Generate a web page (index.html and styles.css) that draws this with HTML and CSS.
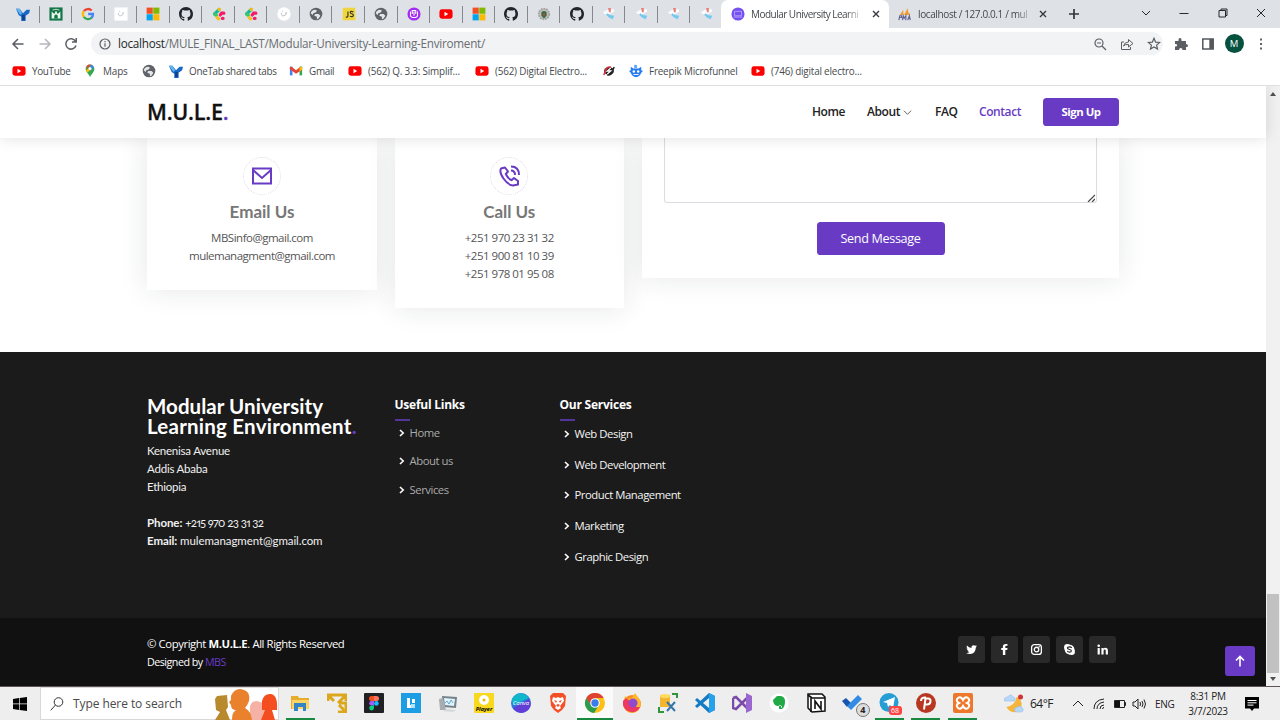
FILE: index.html
```
<!DOCTYPE html>
<html lang="en">
<head>
<meta charset="utf-8">
<title>Modular University Learning Environment</title>
<link rel="stylesheet" href="styles.css">
</head>
<body>
<svg class="defs" width="0" height="0">
  <symbol id="onetab" viewBox="0 0 16 16"><path d="M0 2h4l4 5 4-4h4l-1 4-4 3v6H6v-5L3 9z" fill="#1769c5"/><path d="M0 2l5 7 2-2-3-5z" fill="#63b4ef"/><path d="M7 9h3v6H7z" fill="#123e8c"/></symbol>
  <symbol id="bag" viewBox="0 0 16 16"><path d="M.5.5h15v15H.5z" fill="#137447"/><path d="M3 5v8h10V5l-3 3-2-4-2 4z" fill="#eaf7ed"/><path d="M6 13V10q2-3 4 0v3z" fill="#137447"/><path d="M4 3.500q4-2 8 0" stroke="#cfe9d8" fill="none"/></symbol>
  <symbol id="google" viewBox="0 0 16 16" fill="none" stroke-width="2.6"><path d="M3.2 4.7A6 6 0 0 1 12.2 4" stroke="#ea4335"/><path d="M3.2 11.3a6 6 0 0 1 0-6.6" stroke="#fbbc05"/><path d="M12 12.3a6 6 0 0 1-8.8-1" stroke="#34a853"/><path d="M8.2 8h5.5a6 6 0 0 1-1.8 4.4" stroke="#4285f4"/></symbol>
  <symbol id="plain" viewBox="0 0 16 16"><path d="M.5.5h15v15H.5z" fill="#fff"/><path d="M5 7q0 4 3 3t3-4M6 5h1m2 2h1" stroke="#b9c1ca" fill="none"/></symbol>
  <symbol id="plaincircle" viewBox="0 0 16 16"><circle cx="8" cy="8" r="7.6" fill="#fff"/><path d="M5 7q0 4 3 3t3-4M6 5h1m2 2h1" stroke="#aeb7c1" fill="none"/></symbol>
  <symbol id="ms" viewBox="0 0 16 16"><path d="M.7.7h7v7h-7z" fill="#f25022"/><path d="M8.3.7h7v7h-7z" fill="#7fba00"/><path d="M.7 8.3h7v7h-7z" fill="#00a4ef"/><path d="M8.3 8.3h7v7h-7z" fill="#ffb900"/></symbol>
  <symbol id="github" viewBox="0 0 16 16"><path fill="#20262d" d="M8 0C3.58 0 0 3.58 0 8c0 3.54 2.29 6.53 5.47 7.59.4.07.55-.17.55-.38v-1.49c-2.01.37-2.53-.49-2.69-.94-.09-.23-.48-.94-.82-1.13-.28-.15-.68-.52-.01-.53.63-.01 1.08.58 1.23.82.72 1.21 1.87.87 2.33.66.07-.52.28-.87.51-1.07-1.78-.2-3.64-.89-3.64-3.95 0-.87.31-1.59.82-2.15-.08-.2-.36-1.02.08-2.12 0 0 .67-.21 2.2.82a7.6 7.6 0 0 1 4 0c1.53-1.04 2.2-.82 2.2-.82.44 1.1.16 1.92.08 2.12.51.56.82 1.27.82 2.15 0 3.07-1.87 3.75-3.65 3.95.29.25.54.73.54 1.48v2.2c0 .21.15.46.55.38A8 8 0 0 0 16 8c0-4.42-3.58-8-8-8z"/></symbol>
  <symbol id="clerk" viewBox="0 0 16 16" stroke-linecap="round" stroke-width="3.800" fill="none"><path d="M3 8l5-5" stroke="#14b89a"/><path d="M3 8l2 1.500" stroke="#3fc66a"/><path d="M8 2.800h.5" stroke="#eabf1c"/><path d="M13.500 7h-2.500L9.500 9" stroke="#f51b67"/><path d="M6 12l1.500 1.500" stroke="#f3c02a"/><path d="M12 13h.5" stroke="#f51b67"/></symbol>
  <symbol id="globe" viewBox="0 0 16 16"><circle cx="8" cy="8" r="7.2" fill="#606368"/><path d="M2 7q1-4 5-4l2 1-1 2-3 1-1 2zm5 1h4l2 2-2 3-2 1v-3l-3-1z" fill="#e4e6e9"/></symbol>
  <symbol id="js" viewBox="0 0 16 16"><path d="M.8.8h14.4v14.4H.8z" fill="#efd63f"/><path d="M6.800 5v5q0 2-2.500 1.500M13 5.600q-3.600-1.400-3.600.6c0 1.800 3.600 1.200 3.600 3.200 0 2-2.500 2-4 1" fill="none" stroke="#37342a" stroke-width="1.3"/></symbol>
  <symbol id="ublock" viewBox="0 0 16 16"><circle cx="8" cy="8" r="7.5" fill="#a32df1"/><path d="M4 5v4q0 3 4 3t4-3V5M6 8V4h4v4M8 5v5" stroke="#fff" stroke-width="1.2" fill="none"/></symbol>
  <symbol id="yt" viewBox="0 0 16 16"><rect y="2.5" x=".5" width="15" height="11" rx="2.8" fill="#f00"/><path d="M6.3 5.5l4.2 2.5-4.2 2.5z" fill="#fff"/></symbol>
  <symbol id="seal" viewBox="0 0 16 16"><circle cx="8" cy="8" r="6" fill="#c5beb7" stroke="#9fa3a0" stroke-width="2" stroke-dasharray="2 1"/><path d="M5 6q3-3 6 0v4l-3 3-3-3z" fill="#366e4b"/><path d="M7 7h2v3H7z" fill="#c0463f"/></symbol>
  <symbol id="fig" viewBox="0 0 16 16"><path d="M1 6l5-3 3 1 4-2 1 3-5 3H3z" fill="#f8fcff"/><path d="M7 1h3v5H8z" fill="#eb7d70"/><path d="M6 7l3 2 5 1-2 4-4-2-3-3z" fill="#73c9f0"/></symbol>
  <symbol id="maps" viewBox="0 0 16 16"><path d="M8 15.500C8 12 3 10 3 5.500a5 5 0 0 1 10 0C13 10 8.600 12 8 15.500z" fill="#34a853"/><path d="M4.200 2.200A5 5 0 0 1 9 .7L5 6z" fill="#ea4335"/><path d="M9 .7a5 5 0 0 1 3.500 2.900L8 8z" fill="#4285f4"/><path d="M3.400 7.500L8 3v4L4.800 10z" fill="#fbbc04"/><circle cx="8" cy="5.500" r="1.700" fill="#fff"/></symbol>
  <symbol id="gmail" viewBox="0 0 16 16"><path d="M1 3h3v10H1z" fill="#4285f4"/><path d="M12 3h3v10h-3z" fill="#34a853"/><path d="M1 3.500L3 3l5 4 5-4 2 .5v3L8 11 1 6z" fill="#ea4335"/><path d="M12 3.500l3 0v3l-3 2z" fill="#fbbc04"/></symbol>
  <symbol id="stop" viewBox="0 0 16 16"><ellipse cx="8" cy="8" rx="5.600" ry="4.500" fill="#1d1d1f"/><path d="M2 12.500L4 9A5 5 0 0 1 10 3.500" fill="none" stroke="#d92d35" stroke-width="1.800"/><path d="M14 3.500L12 7A5 5 0 0 1 6 12.500" fill="none" stroke="#222" stroke-width="1.800"/><path d="M10 4.500L6 8h4l-4 3.500" fill="none" stroke="#fff" stroke-width="1.500"/></symbol>
  <symbol id="freepik" viewBox="0 0 16 16"><path d="M2 3l3 2h6l3-2v4l2 1-2 2q-2 5-6 5t-6-5L0 8l2-1z" fill="#277cf4"/><path d="M6 1h3v4H6z" fill="#5aa3ff"/><circle cx="5.500" cy="8.500" r="1.400" fill="#fff"/><circle cx="10.500" cy="8.500" r="1.400" fill="#fff"/><path d="M5 12h6" stroke="#fff"/></symbol>
  <symbol id="chev" viewBox="0 0 8 10"><path d="M2 2l3.200 3L2 8" fill="none" stroke="#fff" stroke-width="1.600"/></symbol>
</svg>

<div class="tabs">
  <div class="pins">
    <i><svg><use href="#onetab"/></svg></i><i><svg><use href="#bag"/></svg></i><i><svg><use href="#google"/></svg></i><i><svg><use href="#plain"/></svg></i><i><svg><use href="#ms"/></svg></i><i><svg><use href="#github"/></svg></i><i><svg><use href="#clerk"/></svg></i><i><svg><use href="#clerk"/></svg></i><i><svg><use href="#plaincircle"/></svg></i><i><svg><use href="#globe"/></svg></i><i><svg><use href="#js"/></svg></i><i><svg><use href="#globe"/></svg></i><i><svg><use href="#ublock"/></svg></i><i><svg><use href="#yt"/></svg></i><i><svg><use href="#ms"/></svg></i><i><svg><use href="#github"/></svg></i><i><svg><use href="#seal"/></svg></i><i><svg><use href="#github"/></svg></i><i><svg><use href="#fig"/></svg></i><i><svg><use href="#fig"/></svg></i><i><svg><use href="#fig"/></svg></i><i><svg><use href="#fig"/></svg></i>
  </div>
  <div class="tab active"><svg class="fav" viewBox="0 0 16 16"><circle cx="8" cy="8" r="7.500" fill="#7552ef"/><path d="M4 5h8v5H4zM3 11.500h10" stroke="#b8a5ff" fill="none"/></svg><span>Modular University Learni</span><svg class="x" viewBox="0 0 8 8"><path d="M1 1l6 6M7 1L1 7"/></svg></div>
  <div class="tab second"><svg class="fav" viewBox="0 0 16 16"><path d="M2 9l4-6v6zM7 9l4-8 1 8zM12 5l2 4h-2z" fill="#f39a2d"/><path d="M1 15l1-5h2v2H2m3 3l1-5 1 3 2-3v5m2 0l2-5 1 5m-3-2h3" fill="none" stroke="#626594" stroke-width="1.300"/></svg><span>localhost / 127.0.0.1 / mul</span><svg class="x" viewBox="0 0 8 8"><path d="M1 1l6 6M7 1L1 7"/></svg></div>
  <svg class="plus" viewBox="0 0 12 12"><path d="M6 1v10M1 6h10"/></svg>
  <div class="wincontrols">
    <svg viewBox="0 0 10 10"><path d="M1 3l4 4 4-4"/></svg><svg viewBox="0 0 10 10"><path d="M.5 5.500h9"/></svg><svg viewBox="0 0 10 10"><path d="M1 2.500h6.500V9H1zM3 2.500V1h6v6.500H7.500"/></svg><svg viewBox="0 0 10 10"><path d="M1 1l8 8M9 1L1 9"/></svg>
  </div>
</div>

<div class="toolbar">
  <svg class="nav" viewBox="0 0 14 14"><path d="M12.500 7H2m5-5L2 7l5 5"/></svg>
  <svg class="nav dim" viewBox="0 0 14 14"><path d="M1.500 7H12M7 2l5 5-5 5"/></svg>
  <svg class="nav" viewBox="0 0 14 14"><path d="M11.500 4.200A5.200 5.200 0 1 0 12 8.500M12.200 1v4H8"/></svg>
  <div class="omnibox">
    <svg viewBox="0 0 14 14"><circle cx="7" cy="7" r="5"/><path d="M7 6.300v3.500M7 4v1.300"/></svg>
    <span class="url"><b>localhost</b>/MULE_FINAL_LAST/Modular-University-Learning-Enviroment/</span>
    <svg viewBox="0 0 14 14"><circle cx="6" cy="6" r="4"/><path d="M9 9l4 4M4 6h4"/></svg>
    <svg viewBox="0 0 14 14"><path d="M4 5H1.500v7.500h9V10M3.500 9q1-4 5-4V2.500L13 6.500 8.500 10V7.500Q5 7 3.500 9z" stroke-width="1"/></svg>
    <svg viewBox="0 0 14 14"><path d="M7 1.300l1.600 3.800 4.100.3-3.100 2.700.9 4L7 10l-3.500 2.100.9-4-3.100-2.700 4.100-.3z"/></svg>
  </div>
  <svg class="ext" viewBox="0 0 14 14"><path d="M1 4h3.500V3q0-2 1.500-2t1.500 2v1H12v3q2 0 2 1.700T12 10v3H8.500q0-2-1.700-2T5 13H1V9.500q2.200 0 2.200-1.300T1 7z" fill="#5b5f64"/></svg>
  <svg class="side" viewBox="0 0 14 14"><path d="M1.800 2h10.400v10H1.800z" fill="none" stroke="#55595e" stroke-width="1.500"/><path d="M8.300 2h4v10h-4z" fill="#55595e"/></svg>
  <div class="avatar">M</div>
  <svg class="dots" viewBox="0 0 4 14"><path d="M1 1.500h2v2H1zm0 4.500h2v2H1zm0 4.500h2v2H1z" fill="#5f6368"/></svg>
</div>

<div class="bookmarks">
  <a class="b1"><svg><use href="#yt"/></svg><span>YouTube</span></a>
  <a class="b2"><svg><use href="#maps"/></svg><span>Maps</span></a>
  <a class="b3"><svg><use href="#globe"/></svg></a>
  <a class="b4"><svg><use href="#onetab"/></svg><span>OneTab shared tabs</span></a>
  <a class="b5"><svg><use href="#gmail"/></svg><span>Gmail</span></a>
  <a class="b6"><svg><use href="#yt"/></svg><span>(562) Q. 3.3: Simplif...</span></a>
  <a class="b7"><svg><use href="#yt"/></svg><span>(562) Digital Electro...</span></a>
  <a class="b8"><svg><use href="#stop"/></svg></a>
  <a class="b9"><svg><use href="#freepik"/></svg><span>Freepik Microfunnel</span></a>
  <a class="b10"><svg><use href="#yt"/></svg><span>(746) digital electro...</span></a>
</div>

<div class="viewport">
  <div class="page">
    <header class="header">
      <div class="logo">M.U.L.E<em>.</em></div>
      <nav class="menu">
        <a class="m1">Home</a><a class="m2">About</a><svg viewBox="0 0 10 10"><path d="M1 3l4 4 4-4"/></svg><a class="m3">FAQ</a><a class="m4">Contact</a><a class="signup">Sign Up</a>
      </nav>
    </header>
    <section class="contact">
      <div class="card email">
        <div class="ring"><svg viewBox="0 0 24 24"><path d="M3 4.500h18v15H3zM3 6l9 8 9-8"/></svg></div>
        <h3>Email Us</h3>
        <p>MBSinfo@gmail.com</p><p>mulemanagment@gmail.com</p>
      </div>
      <div class="card call">
        <div class="ring"><svg viewBox="0 0 24 24"><path d="M8 3.500L4 4.500Q2 8 6.500 14.500T16 21.500L21 20.500v-3.500l-4-3-2.500 2.200Q10.500 14 8.800 10L11 7.500zM14 6.500q4 0 4 4.500M14 2.500q8 0 8 8.500" stroke-linejoin="round"/></svg></div>
        <h3>Call Us</h3>
        <p>+251 970 23 31 32</p><p>+251 900 81 10 39</p><p>+251 978 01 95 08</p>
      </div>
      <form class="card form">
        <div class="message"><svg viewBox="0 0 8 8"><path d="M1 8l7-7M5 8l3-3"/></svg></div>
        <div class="send">Send Message</div>
      </form>
    </section>
    <footer>
      <div class="ftop">
        <div class="about">
          <h2><span class="h1a">Modular University</span><span class="h1b">Learning Environment<em>.</em></span></h2>
          <p class="a1">Kenenisa Avenue</p><p class="a1">Addis Ababa</p><p class="a1">Ethiopia</p><p>&nbsp;</p>
          <p><b>Phone:</b> <span class="num">+215 970 23 31 32</span></p><p><b>Email:</b> mulemanagment@gmail.com</p>
        </div>
        <div class="links">
          <h4>Useful Links</h4>
          <ul><li><svg><use href="#chev"/></svg>Home</li><li><svg><use href="#chev"/></svg>About us</li><li><svg><use href="#chev"/></svg>Services</li></ul>
        </div>
        <div class="services">
          <h4>Our Services</h4>
          <ul><li><svg><use href="#chev"/></svg>Web Design</li><li><svg><use href="#chev"/></svg>Web Development</li><li><svg><use href="#chev"/></svg>Product Management</li><li><svg><use href="#chev"/></svg>Marketing</li><li><svg><use href="#chev"/></svg>Graphic Design</li></ul>
        </div>
      </div>
      <div class="fbottom">
        <div class="copy"><p>© Copyright <b>M.U.L.E</b>. All Rights Reserved</p><p class="by">Designed by <em>MBS</em></p></div>
        <div class="social">
          <i><svg viewBox="0 0 24 24"><path d="M22 5.800q-1 .5-2.300.6 1.200-.8 1.700-2.100-1.200.7-2.600 1A4 4 0 0 0 12 9Q7 8.700 3.500 4.800q-1.700 3.300 1.300 5.500-1 0-1.900-.5 0 3 3.300 4-1 .3-1.800.1.900 2.600 3.800 2.800Q5.500 18.700 2 18.300 6 20.500 9.500 20.300q10-.8 10.500-12 1.200-1 2-2.500z"/></svg></i>
          <i><svg viewBox="0 0 24 24"><path d="M13.500 22v-9H17l.5-3.800h-4V7c0-1 .3-1.700 1.800-1.700h2.200V2Q9 .5 9 6.500v2.700H6V13h3v9z"/></svg></i>
          <i><svg viewBox="0 0 24 24"><g fill="none" stroke="#fff" stroke-width="2.400"><rect x="3" y="3" width="18" height="18" rx="5"/><circle cx="12" cy="12" r="4.200"/></g><circle cx="17" cy="7" r="1.400"/></svg></i>
          <i><svg viewBox="0 0 24 24"><circle cx="8" cy="8" r="6"/><circle cx="16" cy="16" r="6"/><circle cx="12" cy="12" r="9"/><path d="M16 9q-1-2-4-2c-5 0-5 4 0 5s4 5 0 5q-3 0-4-2.500" fill="none" stroke="#222" stroke-width="2.200"/></svg></i>
          <i><svg viewBox="0 0 24 24"><circle cx="5" cy="5" r="2.400"/><path d="M3 9h4v12H3zM10 9h3.800v1.700q1.200-2 3.600-2 4.600 0 4.600 5.500V21h-4v-6.500q0-2.600-1.900-2.600-2.100 0-2.100 2.600V21h-4z"/></svg></i>
        </div>
        <div class="totop"><svg viewBox="0 0 14 14"><path d="M7 12.500V2.500M3 6.500l4-4 4 4"/></svg></div>
      </div>
    </footer>
  </div>
  <div class="scroll"><b class="up"></b><b class="thumb"></b><b class="down"></b></div>
</div>

<div class="taskbar">
  <div class="start"><svg viewBox="0 0 14 14"><path d="M0 2l6-1v5.600H0zM6.700.900L14 0v6.600H6.700zM0 7.300h6V13l-6-1zM6.700 7.300H14V14l-7.300-1z"/></svg></div>
  <div class="search"><svg class="mag" viewBox="0 0 14 14"><circle cx="8.500" cy="5" r="4.300"/><path d="M5.500 8L.7 13.300"/></svg><span>Type here to search</span>
    <svg class="people" viewBox="0 0 64 32"><path d="M1 11l2-3 10-1 1 12-2 3 4 10H1l5-8-4-2z" fill="#b8892d"/><path d="M35 32l1-9q-1-10 7-10l9 3v16z" fill="#f5b1a4"/><path d="M17 8Q20 1 26 1q11 1 9 12-2 5-4 7 6 3 7 12H18q0-8 4-10-5 0-5-5l-2-3 2-2z" fill="#ea812d"/><path d="M48 13q2-8 9-7 7 1 6 16h-5l3 10H47l4-10h-3z" fill="#f44e20"/></svg>
  </div>
  <div class="apps">
    <i class="on"><svg viewBox="0 0 20 20"><path d="M1 3h7l1 2h10v11H1z" fill="#e6ad2d"/><path d="M2 7h17v9H2z" fill="#fbd563"/><path d="M4 18v-8h12v8h-3v-4H8v4z" fill="#3584c8"/></svg></i>
    <i><svg viewBox="0 0 20 20"><path d="M1 8V2h18v6M2 3l5 5M18 3l-7 7M12 10h7v9h-8M18 18l-6-6" fill="none" stroke="#dba71c" stroke-width="3"/></svg></i>
    <i><svg viewBox="0 0 20 20"><rect width="20" height="20" rx="1" fill="#202124"/><path d="M5 5.500A2.500 2.500 0 0 1 7.500 3H10v5H7.500A2.500 2.500 0 0 1 5 5.500z" fill="#f24e1e"/><path d="M10 3h2.500a2.500 2.500 0 0 1 0 5H10z" fill="#ff7262"/><path d="M10 8H7.500a2.300 2.300 0 0 0 0 4.600H10z" fill="#a259ff"/><circle cx="12.400" cy="10.400" r="2.300" fill="#1abcfe"/><path d="M10 12.600H7.500a2.400 2.400 0 1 0 2.500 2.400z" fill="#0acf83"/></svg></i>
    <i><svg viewBox="0 0 20 20"><path d="M0 0h20v20H0z" fill="#1d9ee4"/><path d="M6 5h3v7h4v3H6zM11 6h3v4h-3z" fill="#fff"/><path d="M10 11h4v4h-4z" fill="#b2e0fa"/></svg></i>
    <i><svg viewBox="0 0 20 20"><path d="M4 3l15 1-1 11-13-1z" fill="#77838b"/><path d="M6 5l11 1-1 7-9-1z" fill="#dff4ff"/><path d="M1 6l4-1 3 12H2z" fill="#a8adb0"/><path d="M8 16l10 1-3 2-10-1z" fill="#d5d8da"/><path d="M7 10l2-2 2 3 2-4 2 3" fill="none" stroke="#6aa8c5"/></svg></i>
    <i><svg viewBox="0 0 20 20"><rect width="20" height="20" rx="1" fill="#f8d91d"/><circle cx="10" cy="7" r="5" fill="#fff"/><circle cx="10" cy="7" r="1.500" fill="#e5bd00"/><text x="10" y="17.500" text-anchor="middle" class="player">Player</text></svg></i>
    <i><svg viewBox="0 0 20 20"><circle cx="10" cy="10" r="10" fill="#287cda"/><path d="M1 6q6-9 14-4l3 3-16 7z" fill="#10b7cb"/><path d="M2 15l16-9q4 7-2 12-8 5-14-3z" fill="#623dd6"/><text x="10" y="12" text-anchor="middle" class="canva">Canva</text></svg></i>
    <i><svg viewBox="0 0 20 20"><path d="M5 0h10l3 3-1 10-3 4-4 3-4-3-3-4L2 3z" fill="#f44f27"/><path d="M5 4l3 1 2-1 2 1 3-1 1 4-4 5 1 2-3 2-3-2 1-2-4-5z" fill="#fff"/><path d="M6 7l3 1-1 2zM14 7l-3 1 1 2zM8 12l2-1 2 1-2 2z" fill="#f44f27"/></svg></i>
    <i class="on lit"><svg viewBox="0 0 20 20"><circle cx="10" cy="10" r="10" fill="#fbc116"/><path d="M1.300 5A10 10 0 0 1 18.700 5H10l-4.300 7z" fill="#df4232"/><path d="M1.300 5A10 10 0 0 0 9 20l5-8H6z" fill="#2b9b4c"/><circle cx="10" cy="10" r="4.800" fill="#fff"/><circle cx="10" cy="10" r="3.700" fill="#397dec"/></svg></i>
    <i><svg viewBox="0 0 20 20"><circle cx="10" cy="11" r="9" fill="#fb8b20"/><path d="M3 3l3 3 4-1 3-5 5 7 1 6-8 7Q4 20 1 12z" fill="#fdb82c"/><path d="M1 8l3-3 4 3 5 6 5 0q-3 6-9 5T1 12z" fill="#ef3860"/><circle cx="11" cy="10" r="4.500" fill="#9249cc"/></svg></i>
    <i><svg viewBox="0 0 20 20"><path d="M2 2h10v12H2z" fill="#f3b62f"/><ellipse cx="7" cy="3" rx="5" ry="2" fill="#ffda60"/><path d="M14 1h5v4M1 14v5h5" fill="none" stroke="#32953b" stroke-width="2"/><path d="M9 9l8 9M17 9l-8 9" stroke="#3175ad" stroke-width="2"/></svg></i>
    <i><svg viewBox="0 0 20 20"><path d="M14 0l6 3v14l-6 3L0 7l2-2 12 10V5L2 15l-2-2z" fill="#137bc4"/><path d="M14 0l6 3v14l-6 3z" fill="#27a1e9"/></svg></i>
    <i><svg viewBox="0 0 20 20"><path d="M1 5v10l3 1L16 4M1 5l3-1 12 12" fill="none" stroke="#7b4baa" stroke-width="2.500"/><path d="M14 0l6 3v14l-6 3z" fill="#9a66cf"/></svg></i>
    <i><svg viewBox="0 0 20 20"><circle cx="10" cy="10" r="9.500" fill="#fff"/><path d="M4 7l4-4h4q4 1 4 5 0 6-3 8h-3v-3h2v2q1 0 1-2-1 0-2-1-2 2-5 0-2-2-2-5z" fill="#20a944"/></svg></i>
    <i><svg viewBox="0 0 20 20"><path d="M2 1l14 0 3 3v14l-13 1-4-4z" fill="#fff" stroke="#111" stroke-width="1.500"/><path d="M5 5h14M5 5v14M2 2l4 3M9 16V8l6 8V8" fill="none" stroke="#111" stroke-width="1.600"/></svg></i>
    <i class="todo"><svg viewBox="0 0 20 20"><path d="M0 8l4-3 5 5-4 4z" fill="#1755ae"/><path d="M5 13L16 2l4 4L9 17z" fill="#328ae4"/></svg><b>4</b></i>
    <i class="on telegram"><svg viewBox="0 0 20 20"><circle cx="10" cy="9.500" r="9.500" fill="#269ed5"/><path d="M4 9l12-5-2 11-3-3-2 2-1-4z" fill="#fff"/></svg><b>68</b></i>
    <i class="on"><svg viewBox="0 0 20 20"><circle cx="10" cy="10" r="10" fill="#b83721"/><path d="M8 16.500l1.500-11H12c4 0 3 6-1 6H9M5 8q0-4 5-3.500" fill="none" stroke="#fff" stroke-width="2"/></svg></i>
    <i class="on"><svg viewBox="0 0 20 20"><rect width="20" height="20" rx="2" fill="#ed782b"/><path d="M5 5q3-2 5 2 2-4 5-2 3 3-1 5 4 2 1 5-3 2-5-2-2 4-5 2-3-3 1-5-4-2-1-5z" fill="none" stroke="#fff" stroke-width="2"/></svg></i>
  </div>
  <div class="tray">
    <svg class="weather" viewBox="0 0 20 20"><path d="M13 3q-1 8-10 10 3 6 9 5 7-3 6-9-1-5-5-6z" fill="#f6b53c"/><path d="M1 7q-1-4 3-4 3-4 6 0 3 1 1 4zM11 16q0-3 3-3 3-2 5 1 2 3-1 4h-6z" fill="#b7d7f8" stroke="#8db6e3" stroke-width=".5"/><circle cx="17" cy="3" r="2.500" fill="#d53232"/></svg>
    <span class="temp">64°F</span>
    <svg class="t1" viewBox="0 0 12 12"><path d="M1 8l5-5 5 5"/></svg>
    <svg class="t2" viewBox="0 0 12 12"><path d="M1 11Q1 2 11 1M4 11q0-6 7-7M7 11q0-4 4-4M9.500 11q0-1.500 1.500-1.500"/></svg>
    <svg class="t3" viewBox="0 0 14 12"><path d="M1.500 2.500h10v7h-10zM11.500 4.500h1v3h-1"/><path d="M2 3h5v6H2z" fill="#111" stroke="none"/></svg>
    <svg class="t4" viewBox="0 0 14 12"><path d="M1 4h2l3-3v10L3 8H1zM8 4q1 2 0 4M10 3q2 3 0 6M12 1.500q3 4.500 0 9"/></svg>
    <span class="eng">ENG</span>
    <div class="clock"><span>8:31 PM</span><span>3/7/2023</span></div>
    <svg class="note" viewBox="0 0 14 14"><path d="M0 0h14v11.500H9L7 14l-2-2.500H0z" fill="#000"/><path d="M2.500 3.500h9M2.500 5.800h9M2.500 8.100h6" stroke="#fff"/></svg>
  </div>
</div>
</body>
</html>
```
FILE: styles.css
```
* { box-sizing: border-box; }
body { margin: 0; width: 1280px; height: 720px; overflow: hidden; font-family: "Open Sans", sans-serif; background: #fff; }
svg { display: block; flex: none; }
.defs { position: absolute; }
p, h2, h3, h4, ul { margin: 0; padding: 0; }
i, em { font-style: normal; }
span { white-space: nowrap; }

/* tab strip */
.tabs { display: flex; height: 28px; background: #dee1e6; }
.pins { display: flex; width: 720px; padding-left: 7px; flex: none; }
.pins i { width: 32.55px; flex: none; display: flex; align-items: center; justify-content: center; background: linear-gradient(#85888c, #85888c) right 6px / 1px 17px no-repeat; }
.pins i:last-child { background: none; }
.pins svg { width: 14px; height: 14px; }
.tab { display: flex; align-items: center; height: 28px; font-size: 10px; color: #45484c; }
.tab .fav { width: 14px; height: 14px; }
.tab span { flex: none; -webkit-mask-image: linear-gradient(90deg, #000 85%, rgba(0,0,0,.15) 98%); }
.active { width: 168px; margin-left: 1px; padding-left: 10px; background: #fff; border-radius: 7px 7px 0 0; }
.active span { width: 112px; margin-left: 6px; letter-spacing: -.52px; }
.x { width: 8px; height: 8px; stroke: #36393d; stroke-width: 1.4; margin-left: 9px; }
.second { width: 166px; padding-left: 9px; }
.second span { width: 115px; margin-left: 6px; letter-spacing: -.38px; }
.second .x { margin-left: 6px; }
.plus { width: 12px; height: 12px; stroke: #33373b; stroke-width: 1.7; margin: 8px 0 0 13px; }
.wincontrols { display: flex; margin-left: 61px; gap: 28.300px; align-items: center; height: 26px; }
.wincontrols svg { width: 10px; height: 10px; fill: none; stroke: #26292c; }
.tabs > .second { background: linear-gradient(#85888c, #85888c) 0 0 / 0 0 no-repeat; }

/* toolbar */
.toolbar { display: flex; align-items: center; height: 31px; padding-left: 11px; background: #fff; }
.nav { width: 14px; height: 14px; fill: none; stroke: #5b5f64; stroke-width: 1.5; margin-right: 12.500px; }
.dim { stroke: #b4b7bb; }
.omnibox { display: flex; align-items: center; width: 1072px; height: 23px; border-radius: 12px; background: #f1f3f4; padding-left: 7px; flex: none; }
.omnibox svg { width: 14px; height: 14px; fill: none; stroke: #5b5f64; stroke-width: 1.200; margin-right: 12.800px; }
.omnibox svg:first-child { margin-right: 6.500px; }
.omnibox svg:last-child { margin-right: 0; }
.url { font-size: 11.700px; color: #6a6d71; width: 975px; letter-spacing: -.26px; margin-top: -1px; }
.url b { font-weight: 400; color: #25272a; }
.ext { width: 14px; height: 14px; margin-left: 11px; }
.side { width: 14px; height: 14px; margin-left: 13px; }
.avatar { width: 19px; height: 19px; border-radius: 50%; background: #07513f; color: #fff; font-size: 9.500px; line-height: 19px; text-align: center; margin-left: 10px; }
.dots { width: 4px; height: 14px; margin-left: 15px; }

/* bookmarks */
.bookmarks { display: flex; align-items: center; height: 27px; padding: 0 0 3px 12px; border-bottom: 1px solid #dedfe1; font-size: 9.900px; letter-spacing: -.3px; color: #46494d; }
.bookmarks a { display: flex; align-items: center; gap: 6px; flex: none; }
.bookmarks svg { width: 14px; height: 14px; }
.b1 { width: 71px; } .b2 { width: 59px; letter-spacing: -.1px; } .b3 { width: 27px; } .b4 { width: 120px; } .b5 { width: 59px; } .b6 { width: 127px; } .b7 { width: 127px; } .b8 { width: 27px; } .b9 { width: 122px; }
.b6, .b7, .b9, .b10 { letter-spacing: -.19px; }

/* page */
.viewport { display: flex; height: 600px; overflow: hidden; }
.page { width: 1266px; flex: none; }
.header { position: relative; z-index: 2; display: flex; height: 52px; padding-left: 147px; align-items: center; background: #fff; box-shadow: 0 0 14px rgba(0,0,0,.13); }
.header em, .about em, .by em { color: #693bc5; }
.logo { width: 665px; font-size: 21.600px; font-weight: 600; color: #111; letter-spacing: -.25px; margin-top: -2px; -webkit-text-stroke: .3px; }
.menu { display: flex; align-items: center; font-size: 12px; font-weight: 600; color: #222; letter-spacing: -.42px; }
.menu a { padding-bottom: 2px; }
.menu svg { width: 9px; height: 9px; fill: none; stroke: #555; margin-left: 4px; }
.menu .m1 { width: 55px; } .menu .m2 { width: 32px; } .menu .m3 { width: 44px; margin-left: 23px; } .menu .m4 { width: 63px; color: #693bc5; }
.menu .signup { width: 76px; height: 28px; line-height: 27px; text-align: center; color: #fff; background: #693bc5; border-radius: 3.600px; font-size: 11.400px; font-weight: 700; letter-spacing: -.5px; margin-left: 1px; padding: 0; }
.contact { display: flex; align-items: flex-start; height: 214px; padding-left: 147px; }
.card { background: #fff; box-shadow: 0 0 27px rgba(30,40,40,.11); font-size: 11.500px; color: #555; text-align: center; }
.card p { line-height: 18px; letter-spacing: -.5px; }
.email { width: 230px; height: 151.500px; padding-top: 19px; }
.call { width: 229.500px; height: 169.500px; margin-left: 17.500px; padding-top: 19px; }
.form { width: 477px; height: 139.500px; margin-left: 18px; }
.ring { width: 38px; height: 38px; margin: 0 auto; border: 1px dotted #e4d8e8; border-radius: 50%; display: flex; align-items: center; justify-content: center; }
.ring svg { width: 24px; height: 24px; fill: none; stroke: #693bc5; stroke-width: 2; }
.card h3 { font-family: Lato, "Open Sans", sans-serif; font-size: 17px; line-height: 20px; margin: 7px 0 7px; color: #777; font-weight: 700; }
.message { display: flex; justify-content: flex-end; align-items: flex-end; width: 433px; height: 65px; margin-left: 22px; border: 1px solid #d9dde1; border-top: 0; border-radius: 0 0 3px 3px; }
.message svg { width: 8px; height: 8px; stroke: #444; stroke-width: 1.200; margin: 0 1px 0 0; }
.send { width: 128px; height: 33px; margin: 19px auto 0; line-height: 33px; background: #693bc5; color: #fff; border-radius: 3.600px; font-size: 12.600px; letter-spacing: -.33px; }

/* footer */
footer { background: #1b1b1b; color: #fff; }
.ftop { display: flex; height: 266px; padding: 45px 0 0 147px; font-size: 11.300px; }
.about { width: 247.500px; font-family: Lato, "Open Sans", sans-serif; font-size: 11.500px; }
.about h2 { display: flex; flex-direction: column; font-size: 20.500px; line-height: 19.500px; font-weight: 700; margin-bottom: 6px; }
.h1a { letter-spacing: .05px; } .h1b { letter-spacing: .23px; }
.about p { line-height: 18px; color: #f1f1f1; letter-spacing: -.08px; }
.about .a1 { letter-spacing: -.22px; }
.about .num { font-variant-numeric: oldstyle-nums proportional-nums; letter-spacing: -.6px; }
.links { width: 165px; }
h4 { font-size: 12px; line-height: 16px; font-weight: 700; height: 24px; letter-spacing: -.24px; background: linear-gradient(#51369a, #51369a) left bottom / 15px 2px no-repeat; }
li { display: flex; align-items: center; list-style: none; letter-spacing: -.45px; }
li svg { width: 8px; height: 10px; margin: 1px 4px 0 3px; }
.links li { height: 28.600px; color: #aaa; }
.services li { height: 30.700px; color: #f5f5f5; }
.links ul, .services ul { margin-top: -3px; }
.fbottom { position: relative; display: flex; height: 68px; background: #111; padding: 15.500px 0 0 147px; font-size: 11.300px; }
.copy { width: 811px; line-height: 19px; letter-spacing: -.4px; }
.by { font-size: 10.700px; letter-spacing: -.5px; }
.social { display: flex; gap: 5.700px; margin-top: 2.500px; }
.social i { width: 27px; height: 27px; border-radius: 3px; background: #292929; display: flex; align-items: center; justify-content: center; }
.social svg { width: 13px; height: 13px; fill: #fff; margin-top: -1px; }
.totop { position: absolute; left: 1225px; top: 28px; width: 29.500px; height: 30px; border-radius: 3px; background: #693bc5; display: flex; align-items: center; justify-content: center; }
.totop svg { width: 14px; height: 14px; fill: none; stroke: #fff; stroke-width: 1.600; }
.scroll { display: flex; flex-direction: column; align-items: center; justify-content: space-between; width: 14px; background: #f1f1f1; padding: 6px 0 5px; }
.up, .down { border: 3px solid transparent; }
.up { border-top: 0; border-bottom: 4px solid #505050; }
.down { border-bottom: 0; border-top: 4px solid #505050; }
.thumb { width: 12px; height: 79px; background: #c1c1c1; margin-top: 494px; }

/* taskbar */
.taskbar { display: flex; height: 34px; background: #eee; border-top: 1px solid #5c5557; color: #222; }
.start { width: 40px; display: flex; align-items: center; justify-content: center; }
.start svg { width: 14px; height: 14px; }
.search { width: 239px; display: flex; align-items: center; background: #fff; border: 1px solid #d8d8d8; padding-left: 9px; font-size: 12px; color: #494949; }
.mag { width: 14px; height: 14px; fill: none; stroke: #333; margin-right: 9px; }
.search span { width: 141px; letter-spacing: -.08px; }
.people { width: 64px; height: 32px; }
.apps { display: flex; padding-left: 3px; width: 722px; flex: none; }
.apps i { position: relative; width: 36.800px; flex: none; display: flex; align-items: center; justify-content: center; }
.apps i svg { width: 20px; height: 20px; margin-bottom: 1px; }
.apps .on { background: linear-gradient(#178a40, #178a40) center bottom / 29px 2px no-repeat; }
.apps .lit { background: linear-gradient(#178a40, #178a40) center bottom / 36px 2px no-repeat, #fafafa; }
.apps b { position: absolute; text-align: center; }
.todo b { right: 1px; bottom: 3px; width: 14px; height: 14px; border: 1px solid #777; border-radius: 50%; background: #ddd; font-size: 9px; line-height: 12px; }
.telegram b { right: 6px; bottom: 5px; width: 13px; height: 9px; border-radius: 3px; background: #f44; color: #fff; font-size: 7px; line-height: 9px; font-weight: 400; }
.player { font-size: 5.500px; font-weight: 700; font-style: italic; }
.canva { font-size: 6px; font-style: italic; fill: #fff; }
.tray { display: flex; align-items: center; font-size: 11px; }
.weather { width: 21px; height: 20px; margin-left: 2px; }
.temp { width: 42px; margin-left: 6px; font-size: 12px; letter-spacing: -.5px; }
.tray svg:not(.weather):not(.note) { height: 12px; fill: none; stroke: #222; }
.t1 { width: 12px; } .t2 { width: 12px; margin-left: 9px; } .t3 { width: 14px; margin-left: 8px; } .t4 { width: 14px; margin-left: 5px; }
.eng { width: 31px; margin-left: 9px; font-size: 10px; letter-spacing: -.3px; }
.clock { display: flex; flex-direction: column; width: 44px; text-align: center; font-size: 10px; line-height: 15px; letter-spacing: -.25px; }
.note { width: 14px; height: 14px; margin-left: 15px; }
```
